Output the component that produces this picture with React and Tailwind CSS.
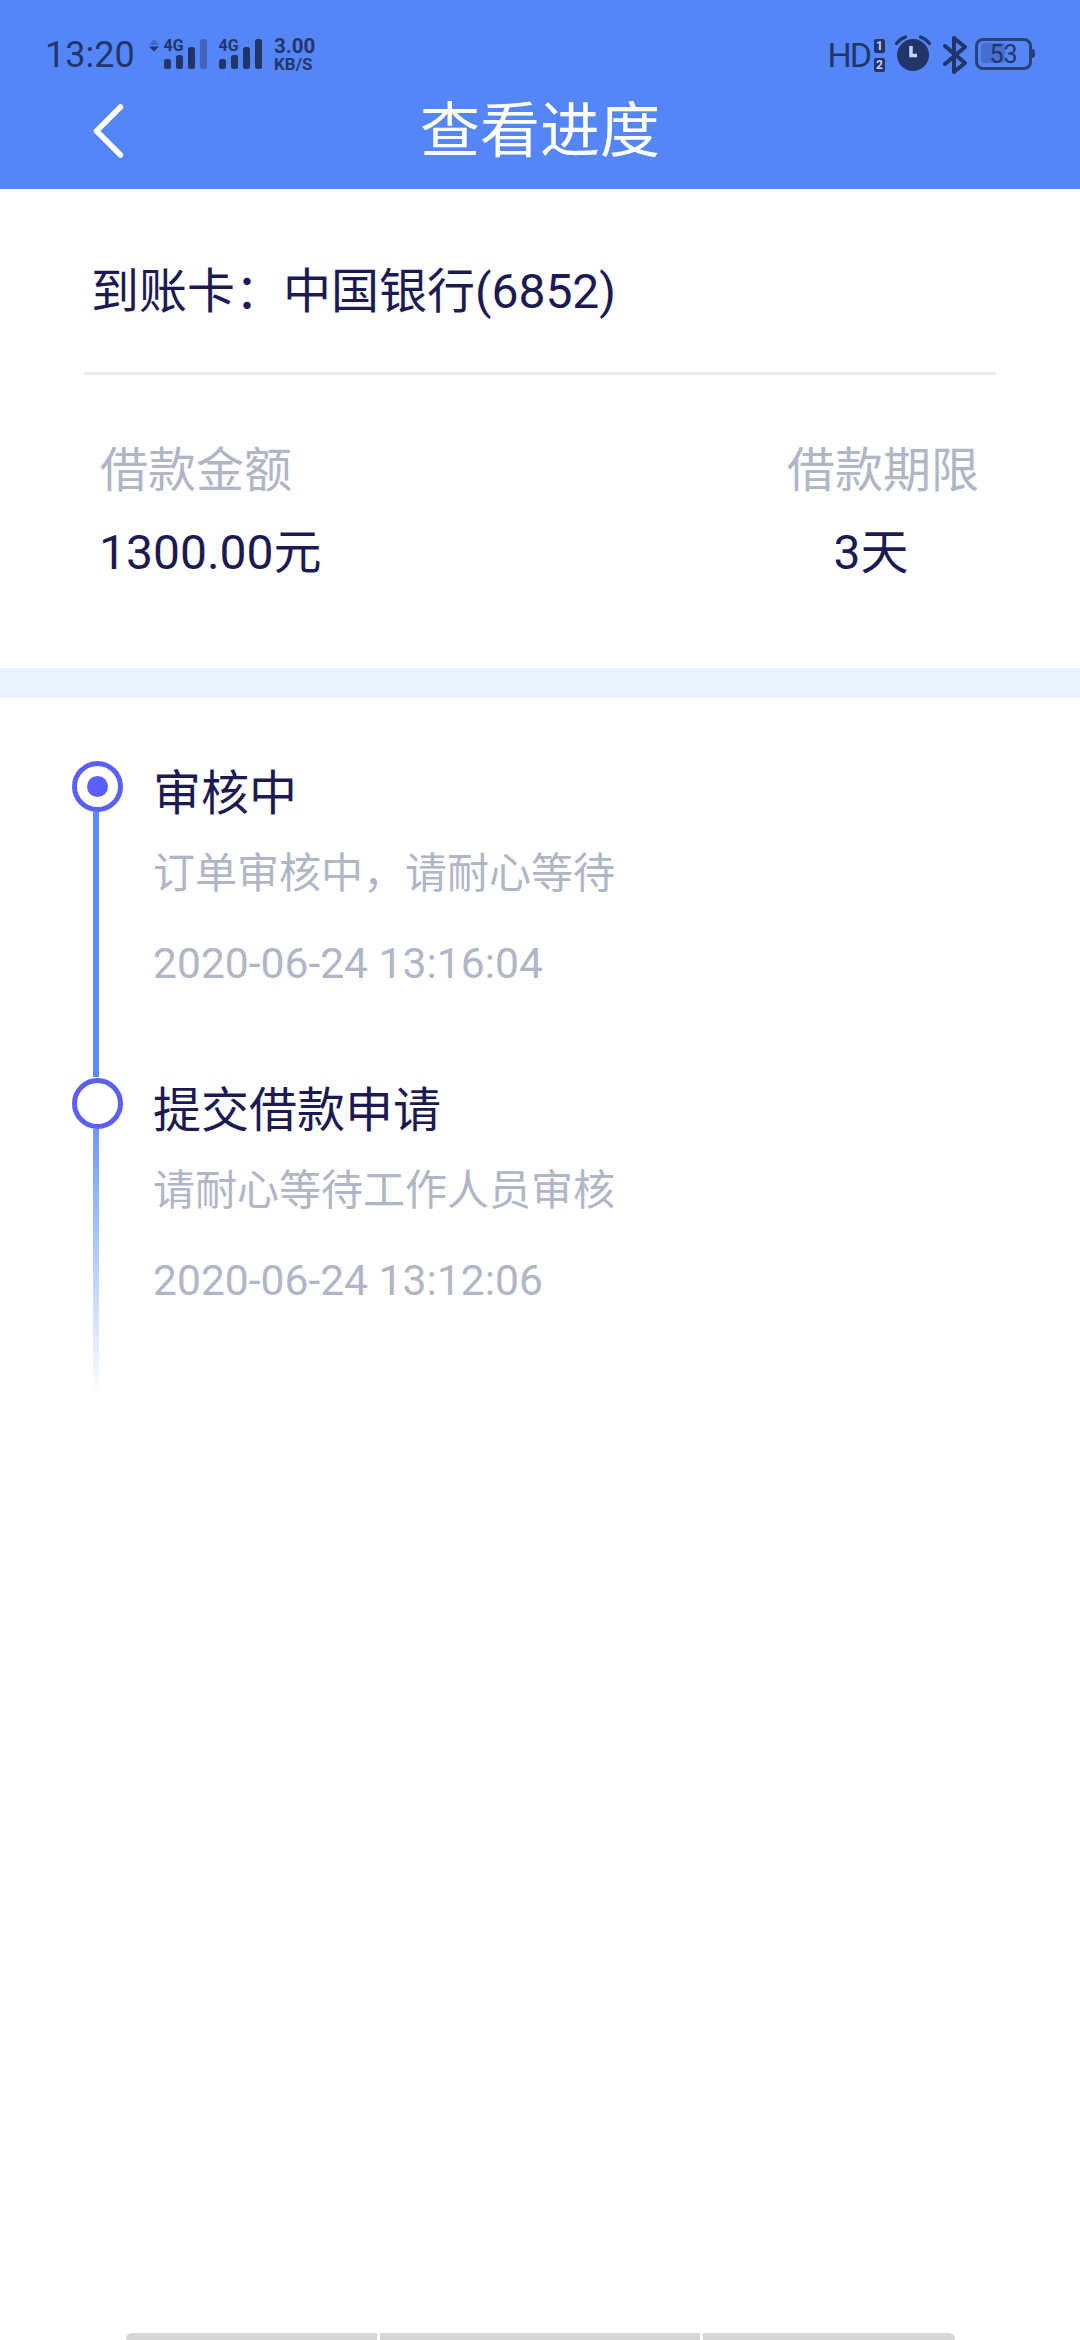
function SignalIcon() {
  return (
    <svg width="116" height="34" viewBox="0 0 116 34" className="block overflow-visible">
      {/* up and down arrows */}
      <path d="M1 7 L6 1 L11 7Z" fill="#22356a" opacity="0.35" />
      <path d="M1 8.5 L11 8.5 L6 13.5Z" fill="#22356a" />
      <text x="15.5" y="13" fontFamily="Roboto, sans-serif" fontWeight="700" fontSize="16" fill="#22356a" textLength="20" lengthAdjust="spacingAndGlyphs">4G</text>
      <rect x="16" y="21" width="7" height="10" rx="2.5" fill="#22356a" />
      <rect x="28" y="17" width="7" height="14" rx="2.5" fill="#22356a" />
      <rect x="40" y="9" width="7" height="22" rx="2.5" fill="#22356a" />
      <rect x="52" y="1" width="7" height="30" rx="2.5" fill="#22356a" opacity="0.4" />
      <text x="70.5" y="13" fontFamily="Roboto, sans-serif" fontWeight="700" fontSize="16" fill="#22356a" textLength="20" lengthAdjust="spacingAndGlyphs">4G</text>
      <rect x="71" y="21" width="7" height="10" rx="2.5" fill="#22356a" />
      <rect x="83" y="17" width="7" height="14" rx="2.5" fill="#22356a" />
      <rect x="95" y="9" width="7" height="22" rx="2.5" fill="#22356a" />
      <rect x="107" y="1" width="7" height="30" rx="2.5" fill="#22356a" />
    </svg>
  );
}

function AlarmIcon() {
  return (
    <svg width="38" height="40" viewBox="0 0 38 40" className="block">
      <circle cx="19" cy="20" r="16" fill="#22356a" />
      <path d="M2.5 8.5 Q6 4 11.5 2 M26.5 2 Q32 4 35.5 8.5" stroke="#22356a" strokeWidth="3.2" strokeLinecap="round" fill="none" />
      <path d="M17 11 V20.5 H23" stroke="#c4d6fc" strokeWidth="3.5" fill="none" />
    </svg>
  );
}

function BluetoothIcon() {
  return (
    <svg width="24" height="38" viewBox="0 1 24 38" className="block">
      <path d="M2 11 L22 28 L11 37 V3 L22 12 L2 29" stroke="#22356a" strokeWidth="4" strokeLinejoin="round" strokeLinecap="round" fill="none" />
    </svg>
  );
}

function Battery() {
  return (
    <div className="relative w-[60px] h-[32px] -mt-[2px]">
      <div className="absolute left-0 top-0 w-[57px] h-[32px] rounded-[8px] border-[3px] border-[#2a4079]" />
      <div className="absolute left-[6px] top-[5px] w-[24px] h-[20px] rounded-[3px] bg-[#4570d2]" />
      <div className="absolute left-[57px] top-[11px] w-[3px] h-[9px] rounded-r-full bg-[#2a4079]" />
      <div className="absolute left-0 top-0 w-[57px] h-[32px] flex items-center justify-center text-[25px] leading-none text-[#22356a] font-['Roboto',sans-serif]">53</div>
    </div>
  );
}

function StatusBar() {
  return (
    <div className="h-[73px] flex justify-between items-start pt-[33px] pl-[45px] pr-[45px] text-[#22356a] font-['Roboto',sans-serif]">
      <div className="flex items-center h-[44px]">
        <span className="text-[36px] leading-none w-[103px]">13:20</span>
        <SignalIcon />
        <div className="ml-[10px] flex flex-col font-bold">
          <span className="text-[20.5px] leading-[18px]">3.00</span>
          <span className="text-[17px] leading-[18px]">KB/S</span>
        </div>
      </div>
      <div className="flex items-center h-[44px]">
        <span className="text-[34px] leading-none tracking-[-2px]">HD</span>
        <div className="ml-[4px] flex flex-col gap-[5px] mr-[9px]">
          <span className="w-[11px] h-[14px] rounded-[2px] bg-[#22356a] text-[#c4d6fc] text-[12px] leading-[14px] text-center font-bold">1</span>
          <span className="w-[11px] h-[14px] rounded-[2px] bg-[#22356a] text-[#c4d6fc] text-[12px] leading-[14px] text-center font-bold">2</span>
        </div>
        <AlarmIcon />
        <div className="ml-[11px] mr-[8px]"><BluetoothIcon /></div>
        <Battery />
      </div>
    </div>
  );
}

function Step({ active, fade, title, desc, time }) {
  return (
    <div className="flex h-[317px] pl-[72px]">
      <div className="w-[51px] flex flex-col items-center">
        <div className="w-[51px] h-[51px] rounded-full border-[5.5px] border-[#5b5ffe] flex items-center justify-center shrink-0">
          {active && <div className="w-[21px] h-[21px] rounded-full bg-[#5b5ffe]" />}
        </div>
        {fade ? (
          <div className="w-[6px] h-[266px] -ml-[3px] bg-linear-to-b from-[#6f9bfd] to-white" />
        ) : (
          <div className="w-[6px] h-[265px] -ml-[3px] bg-[#5b8cff]" />
        )}
      </div>
      <div className="ml-[30px] pt-[1px]">
        <div className="text-[48px] leading-[64px] text-[#1c1a52]">{title}</div>
        <div className="mt-[23px] text-[42px] leading-[50px] text-[#b0b6c6]">{desc}</div>
        <div className="mt-[39px] text-[42.6px] leading-[50px] text-[#b0b6c6]">{time}</div>
      </div>
    </div>
  );
}

export default function App() {
  return (
    <div className="w-[1080px] h-[2340px] bg-white relative overflow-hidden font-['Roboto','Noto_Sans_CJK_SC',sans-serif]">
      {/* Header */}
      <header className="h-[189px] bg-[#5586f8]">
        <StatusBar />
        <div className="relative h-[116px] flex items-center justify-center">
          <svg width="36" height="58" viewBox="0 0 36 58" className="absolute left-[91px] top-[29px]">
            <path d="M29.5 5 L5.5 29 L29.5 53" stroke="#fff" strokeWidth="5.5" strokeLinecap="round" strokeLinejoin="round" fill="none" />
          </svg>
          <h1 className="text-[60px] leading-none text-white pt-[2px]">查看进度</h1>
        </div>
      </header>

      {/* Loan card */}
      <section className="h-[479px] pt-[72px]">
        <div className="px-[91px] text-[48px] leading-[62px] text-[#1c1a52]">到账卡：中国银行(6852)</div>
        <div className="mx-[84px] mt-[49px] h-[3px] bg-[#ebecee]" />
        <div className="mt-[65px] pl-[100px] pr-[101px] flex justify-between">
          <div>
            <div className="text-[48px] leading-[62px] text-[#b0b6c6]">借款金额</div>
            <div className="mt-[20px] -ml-[1px] text-[48px] leading-[62px] text-[#1c1a52]">1300.00元</div>
          </div>
          <div className="flex flex-col items-center">
            <div className="text-[48px] leading-[62px] text-[#b0b6c6]">借款期限</div>
            <div className="mt-[20px] mr-[24px] text-[48px] leading-[62px] text-[#1c1a52]">3天</div>
          </div>
        </div>
      </section>
      <div className="h-[30px] bg-[#e9f0fe]" />

      {/* Timeline */}
      <section className="pt-[63px]">
        <Step active title="审核中" desc="订单审核中，请耐心等待" time="2020-06-24 13:16:04" />
        <Step fade title="提交借款申请" desc="请耐心等待工作人员审核" time="2020-06-24 13:12:06" />
      </section>

      {/* Bottom bar */}
      <div className="absolute bottom-0 left-[126px] w-[829px] h-[7px] flex gap-[3px]">
        <div className="w-[251px] bg-[#d6d6d6] rounded-tl-[6px]" />
        <div className="w-[320px] bg-[#d6d6d6]" />
        <div className="w-[252px] bg-[#d6d6d6] rounded-tr-[6px]" />
      </div>
    </div>
  );
}
